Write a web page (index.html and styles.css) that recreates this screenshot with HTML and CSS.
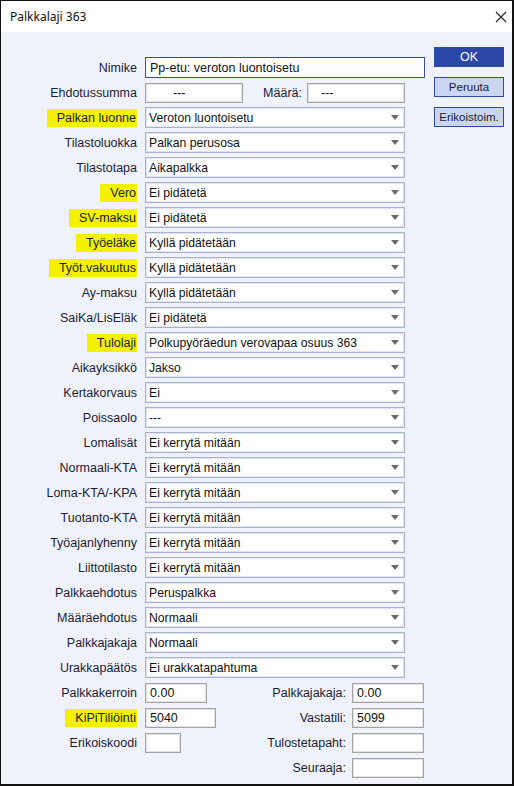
FILE: index.html
```html
<!DOCTYPE html>
<html lang="fi">
<head>
    <meta charset="UTF-8">
    <title>Palkkalaji 363</title>
    <link rel="stylesheet" href="styles.css">
</head>
<body>
    <div class="window">
        <div class="titlebar">
            <span class="title">Palkkalaji 363</span>
            <svg class="close" width="12" height="12" viewBox="0 0 12 12">
                <path d="M1 1 L11 11 M11 1 L1 11" stroke="#222" stroke-width="1.1" fill="none"/>
            </svg>
        </div>

        <div class="content">
            <div class="form">
                <div class="row">
                    <label class="lbl">Nimike</label>
                    <input class="text name" type="text" value="Pp-etu: veroton luontoisetu">
                </div>
                <div class="row">
                    <label class="lbl">Ehdotussumma</label>
                    <input class="text sum" type="text" value="---">
                    <label class="lbl2 amount-lbl">Määrä:</label>
                    <input class="text amount" type="text" value="---">
                </div>

                <div class="row"><label class="lbl"><span class="mark">Palkan luonne</span></label><div class="select"><select><option>Veroton luontoisetu</option></select></div></div>
                <div class="row"><label class="lbl">Tilastoluokka</label><div class="select"><select><option>Palkan perusosa</option></select></div></div>
                <div class="row"><label class="lbl">Tilastotapa</label><div class="select"><select><option>Aikapalkka</option></select></div></div>
                <div class="row"><label class="lbl"><span class="mark">Vero</span></label><div class="select"><select><option>Ei pidätetä</option></select></div></div>
                <div class="row"><label class="lbl"><span class="mark">SV-maksu</span></label><div class="select"><select><option>Ei pidätetä</option></select></div></div>
                <div class="row"><label class="lbl"><span class="mark">Työeläke</span></label><div class="select"><select><option>Kyllä pidätetään</option></select></div></div>
                <div class="row"><label class="lbl"><span class="mark">Työt.vakuutus</span></label><div class="select"><select><option>Kyllä pidätetään</option></select></div></div>
                <div class="row"><label class="lbl">Ay-maksu</label><div class="select"><select><option>Kyllä pidätetään</option></select></div></div>
                <div class="row"><label class="lbl">SaiKa/LisEläk</label><div class="select"><select><option>Ei pidätetä</option></select></div></div>
                <div class="row"><label class="lbl"><span class="mark">Tulolaji</span></label><div class="select"><select><option>Polkupyöräedun verovapaa osuus 363</option></select></div></div>
                <div class="row"><label class="lbl">Aikayksikkö</label><div class="select"><select><option>Jakso</option></select></div></div>
                <div class="row"><label class="lbl">Kertakorvaus</label><div class="select"><select><option>Ei</option></select></div></div>
                <div class="row"><label class="lbl">Poissaolo</label><div class="select"><select><option>---</option></select></div></div>
                <div class="row"><label class="lbl">Lomalisät</label><div class="select"><select><option>Ei kerrytä mitään</option></select></div></div>
                <div class="row"><label class="lbl">Normaali-KTA</label><div class="select"><select><option>Ei kerrytä mitään</option></select></div></div>
                <div class="row"><label class="lbl">Loma-KTA/-KPA</label><div class="select"><select><option>Ei kerrytä mitään</option></select></div></div>
                <div class="row"><label class="lbl">Tuotanto-KTA</label><div class="select"><select><option>Ei kerrytä mitään</option></select></div></div>
                <div class="row"><label class="lbl">Työajanlyhenny</label><div class="select"><select><option>Ei kerrytä mitään</option></select></div></div>
                <div class="row"><label class="lbl">Liittotilasto</label><div class="select"><select><option>Ei kerrytä mitään</option></select></div></div>
                <div class="row"><label class="lbl">Palkkaehdotus</label><div class="select"><select><option>Peruspalkka</option></select></div></div>
                <div class="row"><label class="lbl">Määräehdotus</label><div class="select"><select><option>Normaali</option></select></div></div>
                <div class="row"><label class="lbl">Palkkajakaja</label><div class="select"><select><option>Normaali</option></select></div></div>
                <div class="row"><label class="lbl">Urakkapäätös</label><div class="select"><select><option>Ei urakkatapahtuma</option></select></div></div>

                <div class="row">
                    <label class="lbl">Palkkakerroin</label>
                    <div class="cell"><input class="text w62" type="text" value="0.00"></div>
                    <label class="lbl2">Palkkajakaja:</label>
                    <input class="text w72" type="text" value="0.00">
                </div>
                <div class="row">
                    <label class="lbl"><span class="mark">KiPiTiliöinti</span></label>
                    <div class="cell"><input class="text w71" type="text" value="5040"></div>
                    <label class="lbl2">Vastatili:</label>
                    <input class="text w72" type="text" value="5099">
                </div>
                <div class="row">
                    <label class="lbl">Erikoiskoodi</label>
                    <div class="cell"><input class="text w36" type="text" value=""></div>
                    <label class="lbl2">Tulostetapaht:</label>
                    <input class="text w72" type="text" value="">
                </div>
                <div class="row">
                    <span class="lbl"></span>
                    <div class="cell"></div>
                    <label class="lbl2">Seuraaja:</label>
                    <input class="text w72" type="text" value="">
                </div>
            </div>

            <div class="buttons">
                <button class="btn primary">OK</button>
                <button class="btn">Peruuta</button>
                <button class="btn">Erikoistoim.</button>
            </div>
        </div>
    </div>
</body>
</html>
```

FILE: styles.css
```css
html, body {
    margin: 0;
    padding: 0;
}
body {
    font-family: 'Liberation Sans', Arial, sans-serif;
    font-size: 12.5px;
    color: #1c1c34;
}
.window {
    width: 514px;
    height: 786px;
    box-sizing: border-box;
    border-style: solid;
    border-color: #111;
    border-width: 1px 2px 2px 1px;
    background: #eff2fa;
    display: flex;
    flex-direction: column;
}
.titlebar {
    height: 31px;
    flex: none;
    background: #ffffff;
    display: flex;
    align-items: center;
    justify-content: space-between;
    padding: 0 5px 0 9px;
}
.title {
    font-family: 'Noto Sans', sans-serif;
    font-size: 12px;
    color: #111;
}
.close {
    display: block;
}
.content {
    display: flex;
    align-items: flex-start;
    padding-top: 15px;
}
.form {
    width: 424px;
    margin-top: 8px;
}
.buttons {
    display: flex;
    flex-direction: column;
    gap: 10px;
    margin-left: 9px;
}
.btn {
    width: 70px;
    height: 20px;
    padding: 0;
    font-family: 'Liberation Sans', Arial, sans-serif;
    font-size: 11.5px;
    color: #1c1c34;
    background: #c9d5f1;
    border: 1px solid #2f4a9f;
}
.btn.primary {
    background: #2b47a7;
    border-color: #2b47a7;
    color: #ffffff;
    font-size: 12.5px;
}
.row {
    display: flex;
    align-items: center;
    height: 25px;
}
.lbl {
    width: 136px;
    flex: none;
    display: flex;
    justify-content: flex-end;
    margin-right: 8px;
    white-space: nowrap;
}
.mark {
    background: #f3f000;
    padding: 2px 1px 2px 10px;
}
.lbl2 {
    width: 81px;
    text-align: right;
    margin-right: 6px;
    white-space: nowrap;
}
.amount-lbl {
    width: 59px;
    margin-right: 5px;
}
.cell {
    width: 120px;
    flex: none;
}
.text {
    box-sizing: border-box;
    height: 21px;
    margin: 0;
    padding: 0 4px;
    border: 1px solid #a4a4a4;
    box-shadow: inset 0 0 0 1px #e2e2e2;
    background: #ffffff;
    font-family: 'Liberation Sans', Arial, sans-serif;
    font-size: 12.5px;
    color: #111;
    outline: none;
    display: block;
}
.name {
    width: 280px;
    font-size: 12.5px;
    border-color: #3b4d9e;
    box-shadow: none;
}
.sum {
    width: 98px;
    height: 20px;
    padding-left: 27px;
}
.amount {
    width: 98px;
    height: 20px;
    padding-left: 13px;
}
.w62 { width: 62px; height: 20px; }
.w71 { width: 71px; height: 20px; }
.w36 { width: 36px; height: 20px; }
.w72 { width: 72px; height: 20px; }
.select {
    position: relative;
    width: 260px;
}
.select select {
    -webkit-appearance: none;
    appearance: none;
    width: 100%;
    height: 21px;
    box-sizing: border-box;
    margin: 0;
    padding: 0 20px 0 3px;
    border: 1px solid #aab2cc;
    box-shadow: inset 0 0 0 1px #dfe4f2;
    border-radius: 0;
    background: #ffffff;
    font-family: 'Liberation Sans', Arial, sans-serif;
    font-size: 12.2px;
    color: #111;
    outline: none;
}
.select::after {
    content: '';
    position: absolute;
    right: 6px;
    top: 8px;
    border-left: 4px solid transparent;
    border-right: 4px solid transparent;
    border-top: 5px solid #6a6a6a;
    pointer-events: none;
}
```
